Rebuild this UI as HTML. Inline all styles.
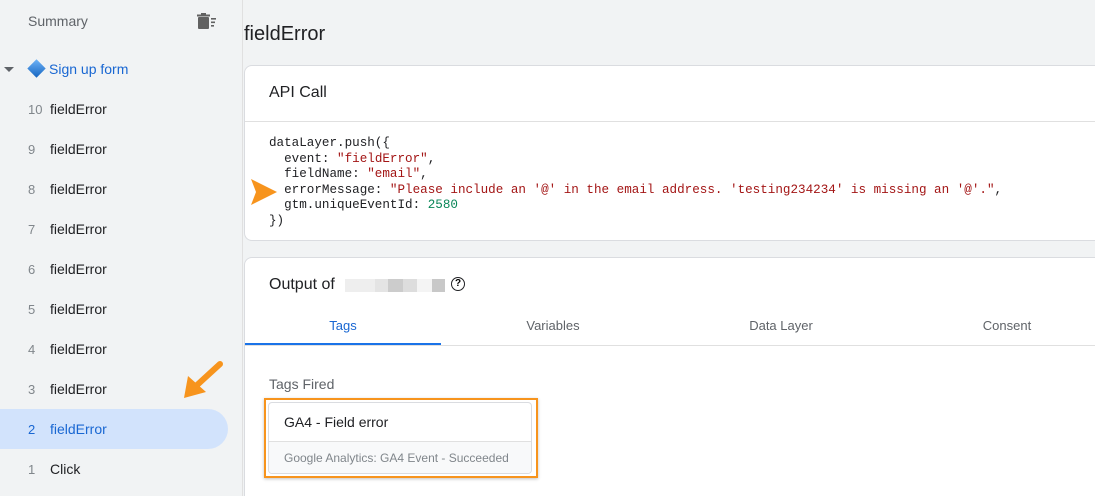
<!DOCTYPE html>
<html><head><style>
*{margin:0;padding:0;box-sizing:border-box}
html,body{width:1095px;height:496px;overflow:hidden}
body{background:#f1f3f4;font-family:"Liberation Sans",sans-serif;position:relative}
.a{position:absolute}
.side{left:0;top:0;width:243px;height:496px;background:#f1f3f4;border-right:1px solid #e0e0e0}
.it{position:absolute;left:0;width:228px;height:40px;line-height:40px;font-size:14px;color:#202124}
.it .n{display:inline-block;width:50px;padding-left:28px;color:#80868b;font-size:13px}
.card{background:#fff;border:1px solid #dadce0;border-radius:8px;left:244px;width:870px}
pre{font-family:"Liberation Mono",monospace;font-size:12.6px;line-height:15.6px;color:#202124}
.s{color:#a31515}.num{color:#098658}
</style></head><body>
<div class="a side">
<div class="a" style="left:28px;top:13px;font-size:14px;color:#5f6368">Summary</div>
<svg class="a" style="left:197px;top:13px" width="22" height="16" viewBox="0 0 22 16"><rect x="1" y="4" width="11" height="12" rx="1" fill="#616161"/><rect x="0" y="1.5" width="13" height="2" fill="#616161"/><rect x="4" y="0" width="5" height="2" fill="#616161"/><rect x="14" y="5" width="5" height="1.6" fill="#616161"/><rect x="14" y="8.5" width="4" height="1.6" fill="#616161"/><rect x="14" y="12" width="3" height="1.6" fill="#616161"/></svg>
<div class="a" style="left:4px;top:67px;width:0;height:0;border-left:5px solid transparent;border-right:5px solid transparent;border-top:5px solid #5f6368"></div>
<div class="a" style="left:30px;top:62px;width:13px;height:13px;transform:rotate(45deg);background:linear-gradient(135deg,#6fb3f7,#1565c0)"></div>
<div class="a" style="left:49px;top:61px;font-size:14px;color:#1967d2">Sign up form</div>
<div class="it" style="top:89px"><span class="n">10</span>fieldError</div>
<div class="it" style="top:129px"><span class="n">9</span>fieldError</div>
<div class="it" style="top:169px"><span class="n">8</span>fieldError</div>
<div class="it" style="top:209px"><span class="n">7</span>fieldError</div>
<div class="it" style="top:249px"><span class="n">6</span>fieldError</div>
<div class="it" style="top:289px"><span class="n">5</span>fieldError</div>
<div class="it" style="top:329px"><span class="n">4</span>fieldError</div>
<div class="it" style="top:369px"><span class="n">3</span>fieldError</div>
<div class="it" style="top:409px;background:#d2e3fc;border-radius:0 20px 20px 0;color:#1967d2"><span class="n" style="color:#1967d2">2</span>fieldError</div>
<div class="it" style="top:449px"><span class="n">1</span>Click</div>
<svg class="a" style="left:180px;top:360px" width="46" height="42" viewBox="0 0 46 42"><path d="M40 4 L16 26" stroke="#f7941d" stroke-width="6" stroke-linecap="round"/><path d="M4 38 L8 16 L26 32 Z" fill="#f7941d"/></svg>
</div>
<div class="a" style="left:244px;top:23px;font-size:20px;color:#202124">fieldError</div>
<div class="a card" style="top:65px;height:176px">
<div class="a" style="left:24px;top:18px;font-size:16px;color:#202124">API Call</div>
<div class="a" style="left:0;top:55px;width:100%;border-top:1px solid #e0e0e0"></div>
<pre class="a" style="left:24px;top:70px">dataLayer.push({
  event: <span class="s">"fieldError"</span>,
  fieldName: <span class="s">"email"</span>,
  errorMessage: <span class="s">"Please include an '@' in the email address. 'testing234234' is missing an '@'."</span>,
  gtm.uniqueEventId: <span class="num">2580</span>
})</pre>
</div>
<svg class="a" style="left:250px;top:177px" width="28" height="30" viewBox="0 0 28 30"><path d="M1 2 L27 15 L1 28 L6 15 Z" fill="#f7941d"/></svg>
<div class="a card" style="top:257px;height:260px">
<div class="a" style="left:24px;top:18px;font-size:16px;color:#202124">Output of</div>
<div class="a" style="left:100px;top:21px;width:100px;height:13px;background:linear-gradient(90deg,#eee 0 30%,#e4e4e4 30% 43%,#ccc 43% 58%,#ddd 58% 72%,#f4f4f4 72% 87%,#c8c8c8 87%)"></div>
<div class="a" style="left:206px;top:19px;width:14px;height:14px;border:1.6px solid #202124;border-radius:50%;font-size:10px;line-height:11px;text-align:center;font-weight:bold">?</div>
<div class="a" style="left:0;top:60px;width:196px;text-align:center;font-size:13px;color:#1967d2">Tags</div>
<div class="a" style="left:196px;top:60px;width:224px;text-align:center;font-size:13px;color:#5f6368">Variables</div>
<div class="a" style="left:420px;top:60px;width:232px;text-align:center;font-size:13px;color:#5f6368">Data Layer</div>
<div class="a" style="left:652px;top:60px;width:220px;text-align:center;font-size:13px;color:#5f6368">Consent</div>
<div class="a" style="left:0;top:85px;width:196px;height:2px;background:#1a73e8"></div>
<div class="a" style="left:0;top:87px;width:100%;border-top:1px solid #e0e0e0"></div>
<div class="a" style="left:24px;top:118px;font-size:14px;color:#5f6368">Tags Fired</div>
</div>
<div class="a" style="left:264px;top:398px;width:274px;height:80px;border:2px solid #f7941d;box-shadow:0 1px 3px rgba(0,0,0,.25)"></div>
<div class="a" style="left:268px;top:402px;width:264px;height:72px;border:1px solid #dadce0;border-radius:4px;background:#fff;overflow:hidden">
<div class="a" style="left:15px;top:11px;font-size:14px;color:#202124">GA4 - Field error</div>
<div class="a" style="left:0;top:38px;width:100%;height:34px;background:#f8f9fa;border-top:1px solid #e0e0e0"></div>
<div class="a" style="left:15px;top:48px;font-size:12px;color:#80868b">Google Analytics: GA4 Event - Succeeded</div>
</div>
</body></html>
